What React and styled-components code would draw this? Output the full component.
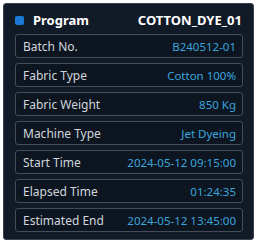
import React from "react";
import styled, { createGlobalStyle } from "styled-components";

const GlobalStyle = createGlobalStyle`
  html, body {
    margin: 0;
    padding: 0;
    background: #ffffff;
  }
  body {
    font-family: "Noto Sans", "Open Sans", sans-serif;
  }
`;

const rows = [
  { label: "Batch No.", value: "B240512-01" },
  { label: "Fabric Type", value: "Cotton 100%" },
  { label: "Fabric Weight", value: "850 Kg" },
  { label: "Machine Type", value: "Jet Dyeing" },
  { label: "Start Time", value: "2024-05-12 09:15:00" },
  { label: "Elapsed Time", value: "01:24:35" },
  { label: "Estimated End", value: "2024-05-12 13:45:00" },
];

export default function App() {
  return (
    <>
      <GlobalStyle />
      <Page>
        <Panel>
          <Header>
            <Title>
              <Marker />
              Program
            </Title>
            <ProgramName>COTTON_DYE_01</ProgramName>
          </Header>
          <List>
            {rows.map((r) => (
              <Row key={r.label}>
                <Label>{r.label}</Label>
                <Value>{r.value}</Value>
              </Row>
            ))}
          </List>
        </Panel>
      </Page>
    </>
  );
}

const Page = styled.div`
  padding: 3px 2px 3px 3px;
`;

const Panel = styled.section`
  width: 251px;
  box-sizing: border-box;
  background: #111a27;
  border: 1px solid #3a4350;
  border-radius: 3px;
  padding: 6px 10px 7px 11px;
`;

const Header = styled.div`
  height: 20px;
  display: flex;
  align-items: center;
  justify-content: space-between;
  margin-bottom: 4px;
  padding-right: 1px;
`;

const Title = styled.div`
  display: flex;
  align-items: center;
  gap: 9px;
  color: #ffffff;
  font-size: 13px;
  font-weight: 700;
`;

const Marker = styled.span`
  width: 9px;
  height: 9px;
  border-radius: 2px;
  background: #1a7ad6;
`;

const ProgramName = styled.div`
  color: #ffffff;
  font-size: 13px;
  font-weight: 700;
`;

const List = styled.div`
  display: flex;
  flex-direction: column;
  gap: 5px;
`;

const Row = styled.div`
  height: 24px;
  box-sizing: border-box;
  display: flex;
  align-items: center;
  justify-content: space-between;
  padding: 0 6px 0 7px;
  background: #0c1520;
  border: 1px solid #434d5a;
  border-radius: 3px;
`;

const Label = styled.span`
  color: #d2d6dc;
  font-size: 12px;
`;

const Value = styled.span`
  color: #3aa6dc;
  font-size: 11.5px;
`;
